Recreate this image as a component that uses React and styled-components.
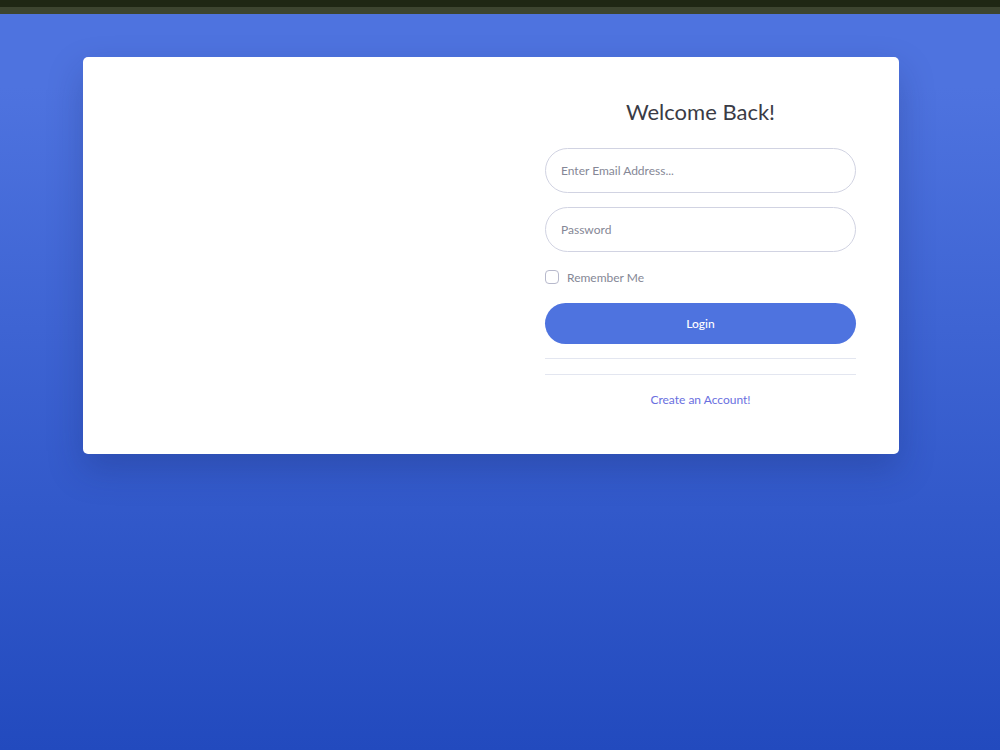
import React from "react";
import styled, { createGlobalStyle } from "styled-components";

const Global = createGlobalStyle`
  html, body { margin: 0; padding: 0; }
  body {
    font-family: Lato, "Noto Sans", sans-serif;
    background: linear-gradient(180deg, #4e73df 10%, #224abe 100%);
    min-height: 750px;
  }
`;

const Page = styled.div`
  min-height: 750px;
  display: flex;
  flex-direction: column;
`;

const TopBar = styled.div`
  height: 14px;
  background: linear-gradient(180deg, #1f2714 0 7px, #3d4530 7px 14px);
`;

const Main = styled.div`
  padding: 43px 101px 0 83px;
  background: linear-gradient(180deg, #4e73df 10%, #224abe 100%);
  flex: 1;
`;

const Card = styled.div`
  width: 816px;
  height: 397px;
  background: #fff;
  border-radius: 5px;
  box-shadow: 0 15px 35px rgba(20, 30, 90, 0.25);
  display: flex;
  box-sizing: border-box;
`;

const ImagePane = styled.div`
  flex: 1;
`;

const FormPane = styled.div`
  width: 311px;
  margin-right: 43px;
  padding-top: 38px;
  display: flex;
  flex-direction: column;
`;

const Title = styled.h1`
  margin: 0 0 19px;
  font-size: 22px;
  font-weight: 400;
  line-height: 34px;
  color: #3a3b45;
  text-align: center;
`;

const Input = styled.input`
  box-sizing: border-box;
  width: 100%;
  height: 45px;
  margin-bottom: ${(p) => p.$mb || 14}px;
  border: 1px solid #d1d3e2;
  border-radius: 999px;
  padding: 0 15px;
  font-family: inherit;
  font-size: 12px;
  color: #6e707e;
  outline: none;
  &::placeholder { color: #858796; }
`;

const CheckRow = styled.label`
  display: flex;
  align-items: center;
  gap: 8px;
  height: 20px;
  margin-bottom: 16px;
  font-size: 12px;
  color: #858796;
`;

const Box = styled.span`
  width: 12px;
  height: 12px;
  border: 1px solid #b7b9cc;
  border-radius: 4px;
  background: #fff;
`;

const Button = styled.button`
  height: 41px;
  border: none;
  border-radius: 999px;
  background: #4e73df;
  color: #fff;
  font-family: inherit;
  font-size: 12px;
  font-weight: 500;
  cursor: pointer;
`;

const Rule = styled.hr`
  margin: ${(p) => p.$mt}px 0 0;
  border: none;
  border-top: 1px solid #e3e6f0;
`;

const LinkRow = styled.div`
  margin-top: 17px;
  text-align: center;
  font-size: 12px;
`;

const Link = styled.a`
  color: #6a6fe0;
  text-decoration: none;
`;

export default function App() {
  return (
    <>
      <Global />
      <Page>
        <TopBar />
        <Main>
          <Card>
            <ImagePane />
            <FormPane>
              <Title>Welcome Back!</Title>
              <Input placeholder="Enter Email Address..." />
              <Input type="password" placeholder="Password" $mb={15} />
              <CheckRow>
                <Box />
                Remember Me
              </CheckRow>
              <Button>Login</Button>
              <Rule $mt={14} />
              <Rule $mt={15} />
              <LinkRow>
                <Link href="#">Create an Account!</Link>
              </LinkRow>
            </FormPane>
          </Card>
        </Main>
      </Page>
    </>
  );
}
